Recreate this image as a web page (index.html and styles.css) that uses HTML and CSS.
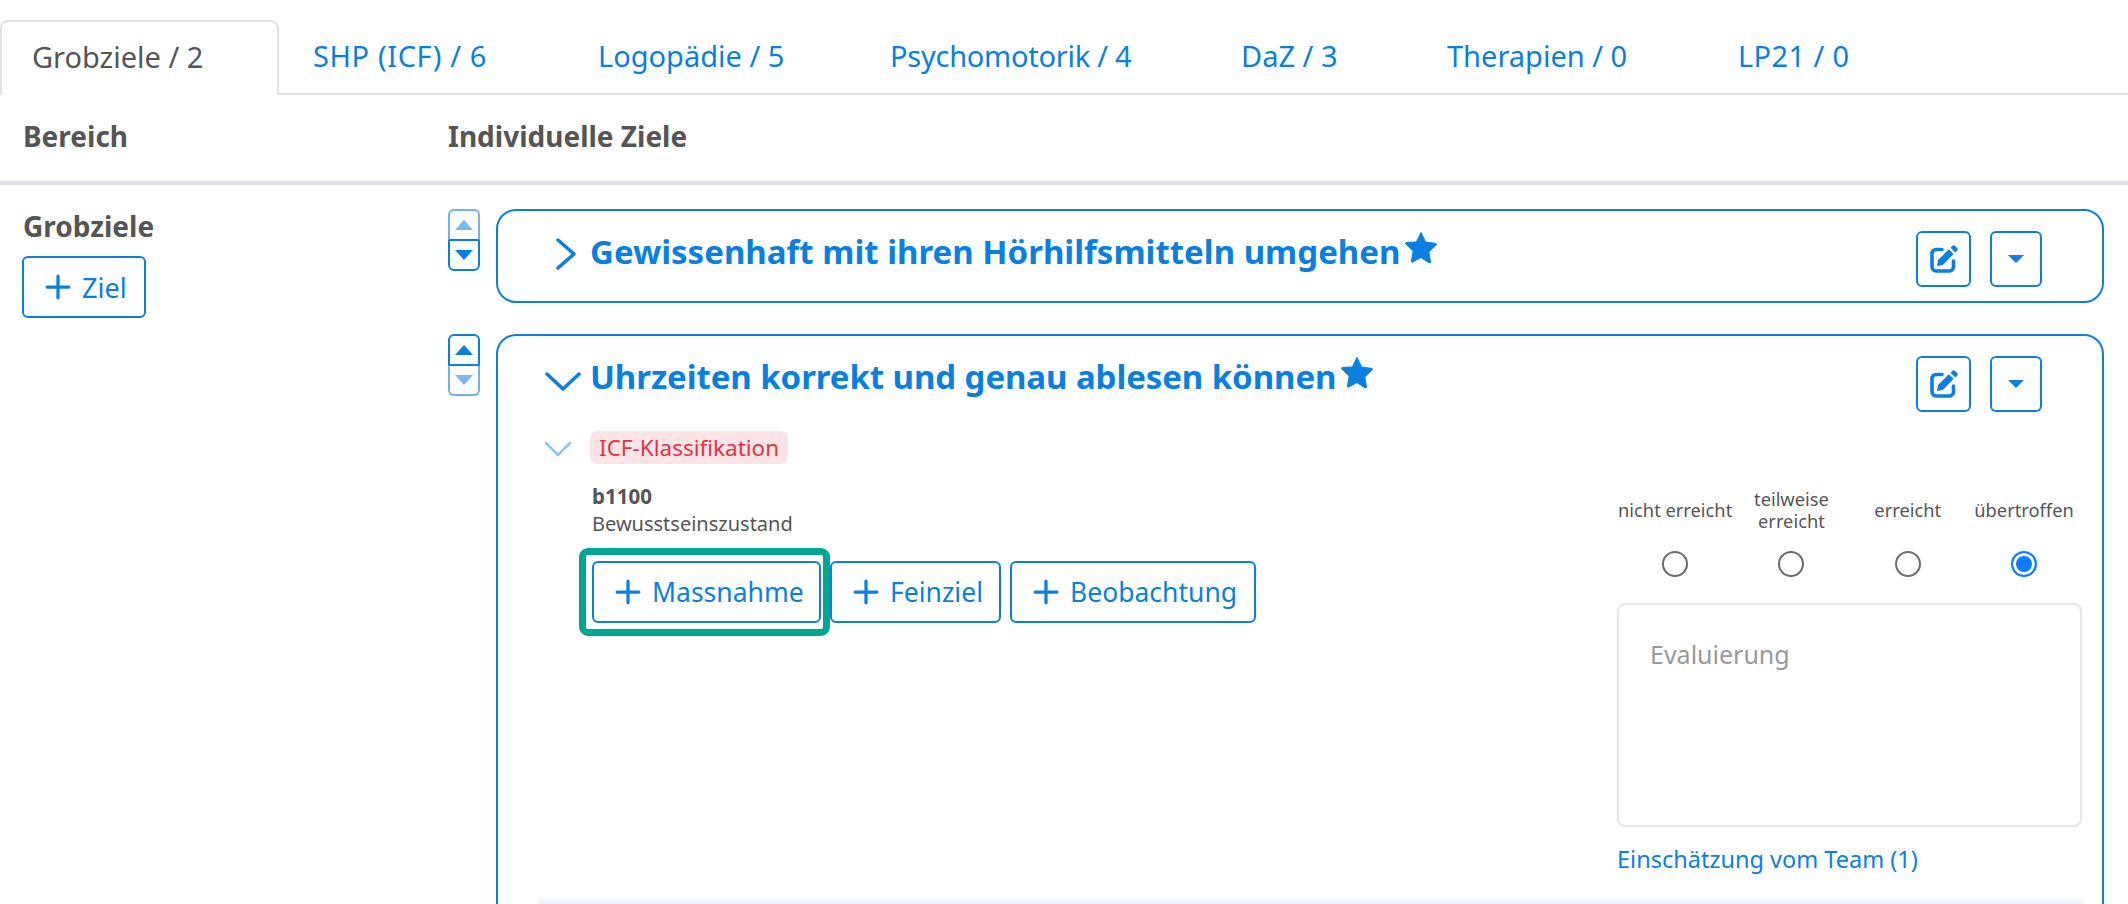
FILE: index.html
```html
<!DOCTYPE html>
<html lang="de">
<head>
<meta charset="utf-8">
<title>Ziele</title>
<link rel="stylesheet" href="styles.css">
</head>
<body>
<svg class="defs" width="0" height="0" aria-hidden="true">
  <symbol id="i-plus" viewBox="0 0 24 24"><path d="M12 2v20M2 12h20" fill="none" stroke="currentColor" stroke-width="3" stroke-linecap="round"/></symbol>
  <symbol id="i-star" viewBox="0 0 34 32"><path d="M17 1.500l4.600 9.500 10.200 1.400a0.800 0.800 0 0 1 .4 1.400l-7.400 7.200 1.800 10.300a0.800 0.800 0 0 1-1.200 .8L17 26.500l-8.400 4.600a0.800 0.800 0 0 1-1.200-.8l1.800-10.300-7.400-7.200a0.800 0.800 0 0 1 .4-1.400L12.400 11z" fill="currentColor" stroke="currentColor" stroke-width="1" stroke-linejoin="round"/></symbol>
  <symbol id="i-edit" viewBox="0 0 28 28"><path d="M12 4.500H6a4 4 0 0 0-4 4v13.500a4 4 0 0 0 4 4h13.500a4 4 0 0 0 4-4V16" fill="none" stroke="currentColor" stroke-width="3.600" stroke-linecap="round"/><path d="M22.300 .9a2 2 0 0 1 2.800 0l2 2a2 2 0 0 1 0 2.800l-1.800 1.800-4.800-4.800zM18.800 4.300l4.800 4.800L12.800 19.900 7 21l1.100-5.900z" fill="currentColor"/></symbol>
</svg>

<nav class="tabs">
  <a class="tab tab-active">Grobziele / 2</a>
  <a class="tab tab-shp">SHP (ICF) / 6</a>
  <a class="tab tab-logo">Logopädie / 5</a>
  <a class="tab tab-psy">Psychomotorik / 4</a>
  <a class="tab tab-daz">DaZ / 3</a>
  <a class="tab tab-the">Therapien / 0</a>
  <a class="tab tab-lp">LP21 / 0</a>
</nav>

<header class="head">
  <div class="col-a">Bereich</div>
  <div>Individuelle Ziele</div>
</header>

<main class="content">
  <aside class="col-a area">
    <h2 class="area-title">Grobziele</h2>
    <button class="btn btn-ziel"><svg class="plus"><use href="#i-plus"/></svg>Ziel</button>
  </aside>

  <div class="goals">
    <div class="goal-row">
      <div class="mover">
        <span class="mv mv-up mv-off"></span>
        <span class="mv mv-down"></span>
      </div>
      <section class="card card-closed">
        <svg class="chev-r" viewBox="0 0 20 32"><path d="M2 2l16 14L2 30" fill="none" stroke="currentColor" stroke-width="3.500" stroke-linecap="round" stroke-linejoin="round"/></svg>
        <h3 class="goal-title">Gewissenhaft mit ihren Hörhilfsmitteln umgehen</h3>
        <svg class="star"><use href="#i-star"/></svg>
        <div class="actions">
          <button class="icon-btn ib-edit"><svg class="edit"><use href="#i-edit"/></svg></button>
          <button class="icon-btn ib-drop"><span class="caret"></span></button>
        </div>
      </section>
    </div>

    <div class="goal-row">
      <div class="mover">
        <span class="mv mv-up"></span>
        <span class="mv mv-down mv-off"></span>
      </div>
      <section class="card card-open">
        <div class="card-top">
          <svg class="chev-d" viewBox="0 0 36 20"><path d="M2 2l16 15L34 2" fill="none" stroke="currentColor" stroke-width="3.500" stroke-linecap="round" stroke-linejoin="round"/></svg>
          <h3 class="goal-title goal-title-tight">Uhrzeiten korrekt und genau ablesen können</h3>
          <svg class="star"><use href="#i-star"/></svg>
          <div class="actions">
            <button class="icon-btn ib-edit"><svg class="edit"><use href="#i-edit"/></svg></button>
            <button class="icon-btn ib-drop"><span class="caret"></span></button>
          </div>
        </div>
        <div class="card-main">
          <div class="left">
            <div class="icf-line">
              <svg class="chev-s" viewBox="0 0 28 16"><path d="M2 2l12 12L26 2" fill="none" stroke="currentColor" stroke-width="2.500" stroke-linecap="round" stroke-linejoin="round"/></svg>
              <span class="badge">ICF-Klassifikation</span>
            </div>
            <div class="code">b1100</div>
            <div class="code-name">Bewusstseinszustand</div>
            <div class="btn-row">
              <button class="btn btn-mass"><svg class="plus"><use href="#i-plus"/></svg>Massnahme<span class="mark"></span></button>
              <button class="btn btn-fein"><svg class="plus"><use href="#i-plus"/></svg>Feinziel</button>
              <button class="btn btn-beo"><svg class="plus"><use href="#i-plus"/></svg>Beobachtung</button>
            </div>
          </div>
          <div class="right">
            <div class="rating">
              <div class="rate"><span class="rate-label">nicht erreicht</span><span class="radio"></span></div>
              <div class="rate"><span class="rate-label">teilweise erreicht</span><span class="radio"></span></div>
              <div class="rate"><span class="rate-label">erreicht</span><span class="radio"></span></div>
              <div class="rate"><span class="rate-label">übertroffen</span><span class="radio radio-on"></span></div>
            </div>
            <div class="evaluation">Evaluierung</div>
            <a class="team-link">Einschätzung vom Team (1)</a>
          </div>
        </div>
        <div class="strip"></div>
      </section>
    </div>
  </div>
</main>
</body>
</html>
```
FILE: styles.css
```css
* { box-sizing: border-box; }
html, body { margin: 0; height: 904px; overflow: hidden; background: #fff; }
body { font-family: "Noto Sans", "Open Sans", sans-serif; color: #555; font-size: 26.5px; }
.defs { position: absolute; }
button { font: inherit; background: #fff; cursor: pointer; }
h2, h3 { margin: 0; }

.tabs { display: flex; height: 95px; padding-top: 20px; border-bottom: 2px solid #dee2e6; font-size: 29px; }
.tab { display: flex; align-items: center; height: 75px; padding-bottom: 5px; color: #0a7fe0; white-space: nowrap; }
.tab-active { width: 279px; padding-left: 30px; color: #555; background: #fff; border: 2px solid #dee2e6; border-bottom: 0; border-radius: 8px 8px 0 0; }
.tab-shp { margin-left: 34px; width: 285px; letter-spacing: .6px; }
.tab-logo { width: 292px; }
.tab-psy { width: 351px; letter-spacing: -.25px; }
.tab-daz { width: 206px; }
.tab-the { width: 291px; }
.tab-lp { letter-spacing: .4px; }

.head { display: flex; align-items: center; height: 90px; padding-bottom: 4px; font-size: 28px; font-weight: 700; border-bottom: 4px solid #dee2e6; }
.col-a { width: 448px; padding-left: 23px; flex: none; }

.content { display: flex; padding-top: 24px; }
.area-title { font-size: 28px; font-weight: 700; line-height: 36px; margin-bottom: 12px; margin-top: -1px; }
.btn { display: inline-flex; align-items: center; height: 62px; border: 2px solid #0a7fe0; border-radius: 6px; color: #0a7fe0; padding: 0 0 0 21px; white-space: nowrap; position: relative; }
.plus { width: 26px; height: 26px; margin-right: 11px; flex: none; }
.btn-ziel { width: 124px; margin-left: -1px; font-size: 27px; }

.goals { flex: 1; display: flex; flex-direction: column; gap: 31px; min-width: 0; padding-right: 24px; }
.goal-row { display: flex; gap: 16px; align-items: flex-start; }
.mover { width: 32px; height: 62px; flex: none; display: flex; flex-direction: column; position: relative; }
.mv { height: 31px; border: 2px solid #0a7fe0; display: flex; align-items: center; justify-content: center; }
.mv::before { content: ""; border-left: 9px solid transparent; border-right: 9px solid transparent; }
.mv-up { border-radius: 6px 6px 0 0; border-bottom-width: 1px; }
.mv-down { border-radius: 0 0 6px 6px; border-top-width: 1px; }
.mv-up::before { border-bottom: 10px solid #0a7fe0; }
.mv-down::before { border-top: 10px solid #0a7fe0; }
.mv-off { border-color: #72b0ee; }
.mv-off::before { opacity: .55; }
.mv-up.mv-off { border-bottom-color: #0a7fe0; }
.mv-down.mv-off { border-top-color: #0a7fe0; }

.card { flex: 1; min-width: 0; border: 2px solid #0a7fe0; border-radius: 20px; background: #fff; color: #0a7fe0; }
.card-closed { height: 94px; display: flex; align-items: flex-start; padding: 20px 22px 0 58px; }
.chev-r { width: 20px; height: 32px; margin-right: 14px; margin-top: 7px; flex: none; }
.chev-d { width: 36px; height: 20px; flex: none; margin-left: 47px; margin-right: 9px; margin-top: 16px; }
.goal-title { font-size: 33px; font-weight: 700; line-height: 44px; margin-top: -1px; white-space: nowrap; }
.goal-title-tight { letter-spacing: -.08px; }
.star { width: 34px; height: 32px; flex: none; margin-left: 4px; }
.actions { margin-left: auto; display: flex; gap: 19px; }
.card-closed .actions { margin-right: 38px; }
.icon-btn { height: 56px; border: 2px solid #0a7fe0; border-radius: 6px; padding: 0; display: flex; align-items: center; justify-content: center; color: #0a7fe0; }
.ib-edit { width: 55px; }
.ib-drop { width: 52px; }
.edit { width: 28px; height: 28px; }
.caret { border-left: 8px solid transparent; border-right: 8px solid transparent; border-top: 8px solid #0a7fe0; }

.card-open { height: 640px; padding: 20px 0 0 0; position: relative; }
.card-top { display: flex; align-items: flex-start; height: 60px; padding-right: 60px; }
.card-main { display: flex; padding-left: 46px; }
.left { flex: none; width: 1073px; padding-top: 15px; color: #555; }
.icf-line { display: flex; align-items: center; height: 33px; margin-bottom: 19px; }
.chev-s { width: 28px; height: 16px; color: #8cc6f3; margin-right: 18px; margin-top: 3px; }
.badge { background: #fce4e6; color: #dc3545; font-size: 22.5px; line-height: 33px; padding: 0 9px; border-radius: 7px; }
.code { font-size: 20.5px; font-weight: 700; line-height: 27px; padding-left: 48px; }
.code-name { font-size: 20px; line-height: 27px; padding-left: 48px; }
.btn-row { display: flex; gap: 9px; margin: 24px 0 0 48px; }
.btn-mass { width: 229px; }
.btn-fein { width: 171px; }
.btn-beo { width: 246px; }
.mark { position: absolute; inset: -15px -11px -15px -15px; border: 7px solid #00a693; border-radius: 9px; }

.right { width: 465px; flex: none; color: #555; margin-top: 62px; }
.rating { display: grid; grid-template-columns: repeat(4, 116.3px); height: 125px; }
.rate { display: flex; flex-direction: column; align-items: center; }
.rate-label { height: 64px; display: flex; align-items: center; justify-content: center; text-align: center; font-size: 18.3px; line-height: 22px; }
.radio { width: 26px; height: 26px; border: 2px solid #6c6c6c; border-radius: 50%; margin-top: 9px; }
.radio-on { border-color: #0d7bff; background: #0d7bff; box-shadow: inset 0 0 0 3px #fff; }
.evaluation { height: 224px; border: 2px solid #e6e6e6; border-radius: 8px; color: #999; padding: 31px; font-size: 25px; line-height: 36px; }
.team-link { display: block; color: #0a7fe0; font-size: 23.500px; line-height: 32px; margin-top: 16px; }
.strip { position: absolute; left: 40px; top: 563px; width: 1546px; height: 40px; background: #f0f6fa; }
```
